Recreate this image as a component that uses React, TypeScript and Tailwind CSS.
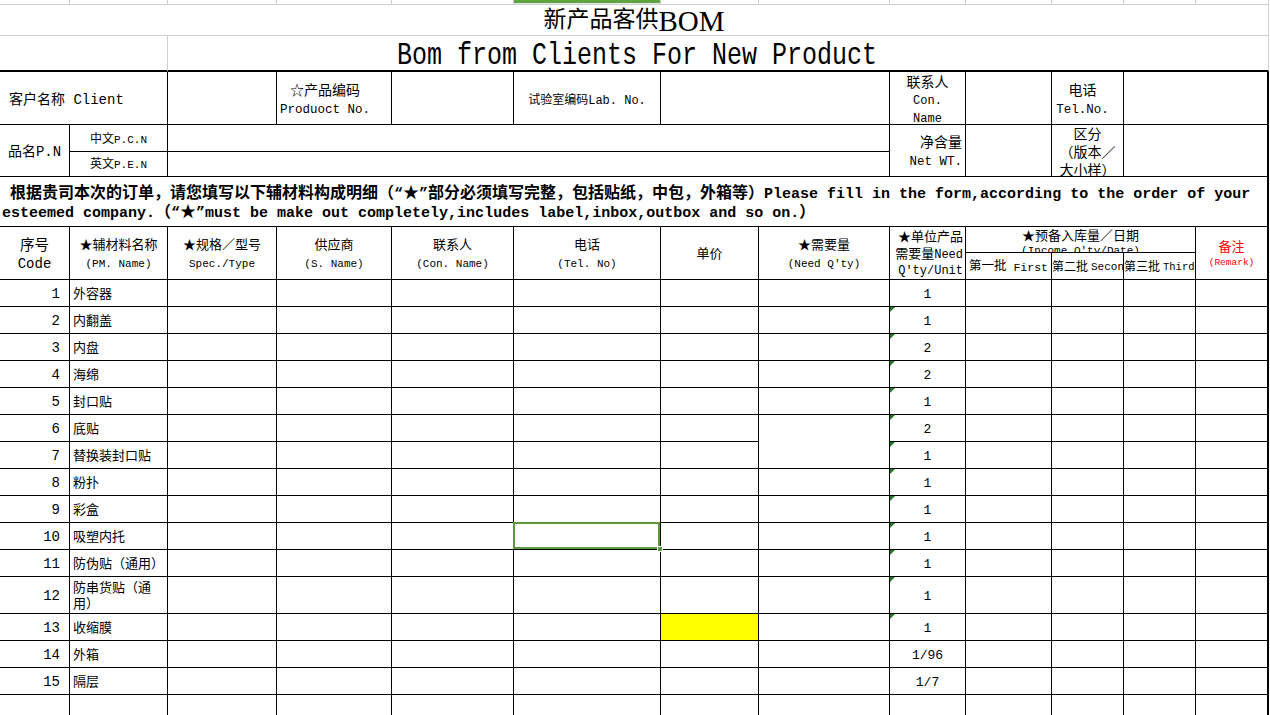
import React from "react";

type CP = { b?: string; className?: string; children?: React.ReactNode };

function C({ b = "border-r border-b border-black", className = "", children }: CP) {
  return <div className={b + " min-w-0 min-h-0 " + className}>{children}</div>;
}

const rows = [
  { n: "1", name: "外容器", q: "1" },
  { n: "2", name: "内翻盖", q: "1" },
  { n: "3", name: "内盘", q: "2" },
  { n: "4", name: "海绵", q: "2" },
  { n: "5", name: "封口贴", q: "1" },
  { n: "6", name: "底贴", q: "2" },
  { n: "7", name: "替换装封口贴", q: "1" },
  { n: "8", name: "粉扑", q: "1" },
  { n: "9", name: "彩盒", q: "1" },
  { n: "10", name: "吸塑内托", q: "1" },
  { n: "11", name: "防伪贴（通用）", q: "1" },
  { n: "12", name: "防串货贴（通用）", q: "1" },
  { n: "13", name: "收缩膜", q: "1" },
  { n: "14", name: "外箱", q: "1/96" },
  { n: "15", name: "隔层", q: "1/7" },
  { n: "", name: "", q: "" },
];

function Tri() {
  return (
    <span className="absolute left-0 top-0 w-0 h-0 border-t-[5px] border-t-[#1f7a1f] border-r-[5px] border-r-transparent" />
  );
}

export default function App() {
  return (
    <div className="w-[1270px] h-[715px] overflow-hidden bg-white text-black font-[family-name:'Liberation_Mono','Noto_Sans_CJK_SC',monospace]">
      {/* column header strip */}
      <div className="grid grid-cols-[70px_98px_109px_115px_122px_147px_98px_131px_76px_86px_72px_72px_73px] h-[5px]">
        <div className="border-r border-b border-[#d0d0d0]" />
        <div className="border-r border-b border-[#d0d0d0]" />
        <div className="border-r border-b border-[#d0d0d0]" />
        <div className="border-r border-b border-[#d0d0d0]" />
        <div className="border-r border-b border-[#d0d0d0]" />
        <div className="border-r border-b border-[#d0d0d0] bg-[#e8e8e8]">
          <div className="h-[3px] bg-[#5fa343]" />
        </div>
        <div className="border-r border-b border-[#d0d0d0]" />
        <div className="border-r border-b border-[#d0d0d0]" />
        <div className="border-r border-b border-[#d0d0d0]" />
        <div className="border-r border-b border-[#d0d0d0]" />
        <div className="border-r border-b border-[#d0d0d0]" />
        <div className="border-r border-b border-[#d0d0d0]" />
        <div className="border-r border-b border-[#d0d0d0]" />
      </div>

      <div className="grid grid-cols-[70px_98px_109px_115px_122px_147px_98px_131px_76px_86px_72px_72px_73px] grid-rows-[31px_36px_53px_27px_25px_50px_26px_27px_repeat(11,27px)_37px_repeat(4,27px)]">
        {/* title */}
        <C b="border-r border-b border-[#d0d0d0]" className="col-span-13 flex items-center justify-center pt-[2px]">
          <span className="text-[23px] leading-none">新产品客供</span>
          <span className="font-[family-name:'Liberation_Serif',serif] text-[29px] leading-none">BOM</span>
        </C>
        {/* subtitle */}
        <C b="border-r border-[#d0d0d0] border-b-2 border-b-black" className="col-span-2" />
        <C b="border-r border-[#d0d0d0] border-b-2 border-b-black" className="col-span-11 flex items-center justify-center pr-[162px] pt-[4px]">
          <span className="inline-block text-[25px] leading-none scale-y-[1.25] whitespace-nowrap">Bom from Clients For New Product</span>
        </C>

        {/* client row */}
        <C className="col-span-2 flex items-center pl-[9px] pt-[5px] text-[14px] whitespace-nowrap">客户名称 Client</C>
        <C />
        <C className="flex flex-col items-center justify-center pr-[18px] pt-[5px] leading-[19px] whitespace-nowrap">
          <span className="text-[14px]">☆产品编码</span>
          <span className="text-[12.5px]">Produoct No.</span>
        </C>
        <C />
        <C className="flex items-center justify-center pt-[5px] text-[12px] whitespace-nowrap">试验室编码Lab. No.</C>
        <C className="col-span-2" />
        <C className="flex flex-col items-center justify-center pt-[5px] leading-[18px] whitespace-nowrap">
          <span className="text-[14px]">联系人</span>
          <span className="text-[12px]">Con.</span>
          <span className="text-[12px]">Name</span>
        </C>
        <C />
        <C className="flex flex-col items-center justify-center pr-[10px] pt-[5px] leading-[19px] whitespace-nowrap">
          <span className="text-[14px]">电话</span>
          <span className="text-[12.5px]">Tel.No.</span>
        </C>
        <C b="border-r-2 border-b border-black" className="col-span-2" />

        {/* product name rows */}
        <C className="row-span-2 flex items-center justify-center pt-[4px] text-[14px] whitespace-nowrap">品名P.N</C>
        <C className="flex items-center justify-center pt-[4px] whitespace-nowrap">
          <span className="text-[12px]">中文</span>
          <span className="text-[11px]">P.C.N</span>
        </C>
        <C className="col-span-6" />
        <C className="row-span-2 flex flex-col items-end justify-center pr-[3px] pt-[4px] leading-[19px] whitespace-nowrap">
          <span className="text-[14px]">净含量</span>
          <span className="text-[12.5px]">Net WT.</span>
        </C>
        <C className="row-span-2" />
        <C className="row-span-2 overflow-hidden flex flex-col items-center justify-center pt-[5px] leading-[18px] text-[14px] whitespace-nowrap">
          <span>区分</span>
          <span>（版本／</span>
          <span>大小样）</span>
        </C>
        <C b="border-r-2 border-b border-black" className="row-span-2 col-span-2" />
        <C className="flex items-center justify-center pt-[2px] whitespace-nowrap">
          <span className="text-[12px]">英文</span>
          <span className="text-[11px]">P.E.N</span>
        </C>
        <C className="col-span-6" />

        {/* instruction */}
        <C b="border-r-2 border-b border-black" className="col-span-13 flex flex-col justify-center pt-[4px] font-bold leading-[18px] whitespace-nowrap overflow-hidden">
          <div className="pl-[10px]">
            <span className="text-[16px]">根据贵司本次的订单，请您填写以下辅材料构成明细（</span>
            <span className="text-[15px]">“</span>
            <span className="text-[16px]">★</span>
            <span className="text-[15px]">”</span>
            <span className="text-[16px]">部分必须填写完整，包括贴纸，中包，外箱等）</span>
            <span className="text-[15px]">Please fill in the form,according to the order of your</span>
          </div>
          <div className="pl-[2px] text-[15px]">
            esteemed company.<span className="text-[16px]">（</span>“<span className="text-[16px]">★</span>”must be make out completely,includes label,inbox,outbox and so on.<span className="text-[16px]">）</span>
          </div>
        </C>

        {/* header */}
        <C className="row-span-2 flex flex-col items-center justify-center pt-[4px] leading-[18px] whitespace-nowrap">
          <span className="text-[14.5px]">序号</span>
          <span className="text-[14px]">Code</span>
        </C>
        <C className="row-span-2 flex flex-col items-center justify-center pt-[4px] leading-[18px] whitespace-nowrap">
          <span className="text-[13px]">★辅材料名称</span>
          <span className="text-[11px]">(PM. Name)</span>
        </C>
        <C className="row-span-2 flex flex-col items-center justify-center pt-[4px] leading-[18px] whitespace-nowrap">
          <span className="text-[13px]">★规格／型号</span>
          <span className="text-[11px]">Spec./Type</span>
        </C>
        <C className="row-span-2 flex flex-col items-center justify-center pt-[4px] leading-[18px] whitespace-nowrap">
          <span className="text-[13px]">供应商</span>
          <span className="text-[11px]">(S. Name)</span>
        </C>
        <C className="row-span-2 flex flex-col items-center justify-center pt-[4px] leading-[18px] whitespace-nowrap">
          <span className="text-[13px]">联系人</span>
          <span className="text-[11px]">(Con. Name)</span>
        </C>
        <C className="row-span-2 flex flex-col items-center justify-center pt-[4px] leading-[18px] whitespace-nowrap">
          <span className="text-[13px]">电话</span>
          <span className="text-[11px]">(Tel. No)</span>
        </C>
        <C className="row-span-2 flex items-center justify-center pt-[4px] text-[13px]">单价</C>
        <C className="row-span-2 flex flex-col items-center justify-center pt-[4px] leading-[18px] whitespace-nowrap">
          <span className="text-[13px]">★需要量</span>
          <span className="text-[11px]">(Need Q&apos;ty)</span>
        </C>
        <C className="row-span-2 flex flex-col items-end justify-center pr-[2px] pt-[4px] leading-[16.5px] whitespace-nowrap">
          <span className="text-[13px]">★单位产品</span>
          <span className="text-[13px]">
            需要量<span className="text-[12px]">Need</span>
          </span>
          <span className="text-[12px]">Q&apos;ty/Unit</span>
        </C>
        <C className="col-span-3 overflow-hidden flex flex-col items-center pt-[3px] leading-[14px] whitespace-nowrap">
          <span className="text-[13px]">★预备入库量／日期</span>
          <span className="text-[11px]">(Income Q&apos;ty/Date)</span>
        </C>
        <C b="border-r-2 border-b border-black" className="row-span-2 flex flex-col items-center justify-center pt-[4px] leading-[15px] text-[#ff0000] whitespace-nowrap">
          <span className="text-[13px]">备注</span>
          <span className="text-[9.5px]">(Remark)</span>
        </C>
        <C className="flex items-center justify-center pt-[3px] overflow-hidden whitespace-nowrap">
          <span className="text-[12.5px]">第一批</span>
          <span className="text-[11.5px]">&nbsp;First</span>
        </C>
        <C className="flex items-center pt-[3px] overflow-hidden whitespace-nowrap">
          <span className="text-[12px]">第二批</span>
          <span className="text-[11px] ml-[3px]">Second</span>
        </C>
        <C className="flex items-center pt-[3px] overflow-hidden whitespace-nowrap">
          <span className="text-[12px]">第三批</span>
          <span className="text-[10.5px] ml-[3px]">Third</span>
        </C>

        {/* data rows */}
        {rows.map((r, i) => (
          <React.Fragment key={i}>
            <C className="flex items-center justify-end pr-[9px] pt-[3px] text-[14px]">{r.n}</C>
            <C className="flex items-center pl-[3px] pr-[2px] pt-[3px] text-[13px] leading-[16px]">{r.name}</C>
            <C />
            <C />
            <C />
            {i === 9 ? (
              <C className="relative">
                <div className="absolute -left-px -top-px right-0 bottom-0 border-2 border-[#5b9b3d]" />
                <div className="absolute -right-[3px] -bottom-[3px] w-[6px] h-[6px] bg-[#5b9b3d] border border-white" />
              </C>
            ) : (
              <C />
            )}
            <C className={i === 12 ? "bg-[#ffff00]" : ""} />
            {i === 5 ? <C className="row-span-2" /> : i === 6 ? null : <C />}
            <C className="relative flex items-center justify-center pt-[3px] text-[13px]">
              {i >= 1 && i <= 12 ? <Tri /> : null}
              {r.q}
            </C>
            <C />
            <C />
            <C />
            <C b="border-r-2 border-b border-black" />
          </React.Fragment>
        ))}
      </div>
    </div>
  );
}
